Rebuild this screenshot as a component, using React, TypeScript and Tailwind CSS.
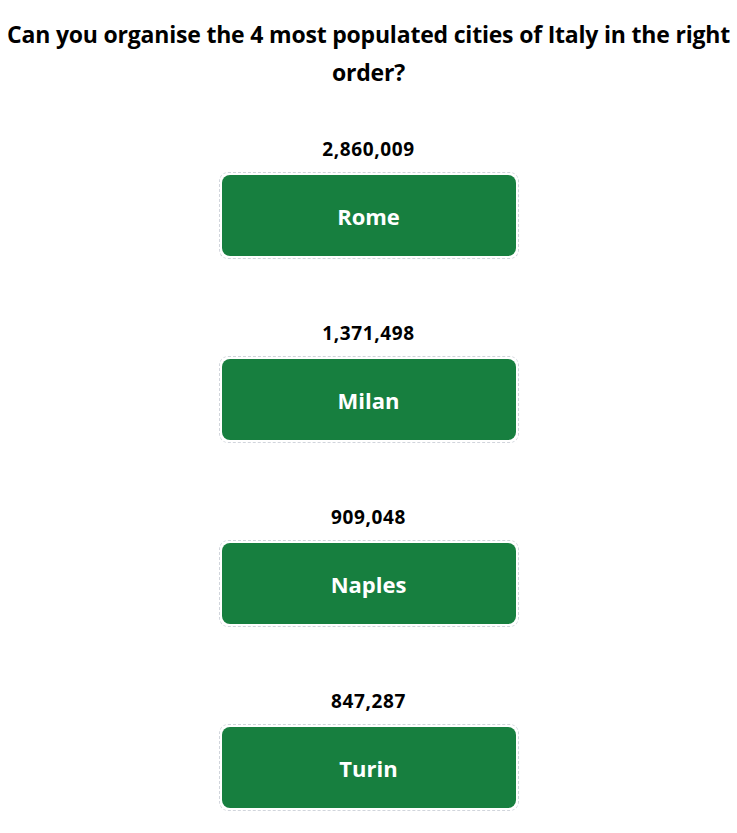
import React from 'react';

const cities = [
    { name: 'Rome', population: '2,860,009' },
    { name: 'Milan', population: '1,371,498' },
    { name: 'Naples', population: '909,048' },
    { name: 'Turin', population: '847,287' },
];

const App: React.FC = () => {
    return (
        <div
            className="min-h-screen bg-white text-center text-black"
            style={{ fontFamily: '"Open Sans", "Noto Sans", sans-serif' }}
        >
            <h1 className="pt-[15px] text-[23px] font-bold leading-[38px] tracking-[-0.2px]">
                Can you organise the 4 most populated cities of Italy in the right order?
            </h1>

            <div className="mt-[45px] flex flex-col items-center gap-[61px]">
                {cities.map((city) => (
                    <div key={city.name} className="flex flex-col items-center">
                        <p className="text-[19px] font-bold leading-[27px] tracking-[0.6px]">{city.population}</p>
                        <div className="mt-[9px] rounded-[9px] border border-dashed border-gray-300 p-[2px]">
                            <div className="flex h-[81px] w-[294px] items-center justify-center rounded-[8px] bg-[#177f3f] pt-[2px] text-[22px] font-bold text-white">
                                {city.name}
                            </div>
                        </div>
                    </div>
                ))}
            </div>
        </div>
    );
};

export default App;
